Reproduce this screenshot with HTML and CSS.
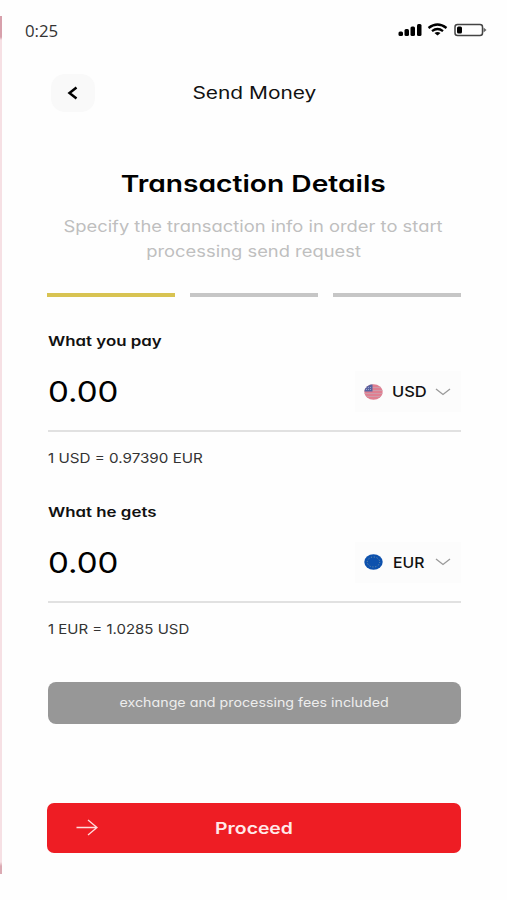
FILE: index.html
```html
<!DOCTYPE html>
<html lang="en">
  <head>
    <meta charset="UTF-8" />
    <meta name="viewport" content="width=device-width, initial-scale=1.0" />
    <title>Send Money</title>
    <link rel="stylesheet" href="styles.css">
  </head>

  <body>
    <div class="edge"></div>
    <div class="screen">
      <div class="status">
        <span class="time">0:25</span>
        <svg class="status-icons" width="90" height="16" viewBox="0 0 90 16">
          <rect x="0.5" y="9.5" width="4.5" height="4.5" rx="1.5" />
          <rect x="6.5" y="7" width="4.5" height="7" rx="1.5" />
          <rect x="12.5" y="4.5" width="4.5" height="9.5" rx="1.5" />
          <rect x="19" y="2" width="4.5" height="12" rx="1.5" />
          <path d="M30.5 6Q39.500 -1 48.500 6M34 9.200Q39.500 4.800 45 9.200" fill="none" stroke="#000" stroke-width="2.300" />
          <path d="M36.500 11Q39.500 9 42.500 11L39.500 13.500Z" />
          <rect x="57" y="2.500" width="27.500" height="11" rx="2.500" fill="none" stroke="#444" stroke-width="1.500" />
          <rect x="59" y="4.500" width="5" height="7" rx="1.500" />
          <path d="M85.500 5.500L88.500 8L85.500 10.500Z" fill="#666" />
        </svg>
      </div>

      <div class="topbar">
        <button class="back">
          <svg width="12" height="14" viewBox="0 0 12 14"><path d="M9.500 1.500L2.500 7L9.500 12.500" fill="none" stroke="#000" stroke-width="2.500" /></svg>
        </button>
        <div class="page-name"><span>Send Money</span></div>
      </div>

      <h1><span>Transaction Details</span></h1>
      <p class="intro"><span>Specify the transaction info in order to start</span><br><span class="intro-end">processing send request</span></p>

      <div class="steps">
        <div class="step active"></div>
        <div class="step"></div>
        <div class="step"></div>
      </div>

      <div class="field">
        <div class="label"><span class="pay">What you pay</span></div>
        <div class="row">
          <div class="amount"><span>0.00</span></div>
          <div class="currency">
            <svg class="flag" width="19" height="16" viewBox="0 0 19 16">
              <defs><clipPath id="round"><ellipse cx="9.500" cy="8" rx="9.200" ry="7.700" /></clipPath></defs>
              <g clip-path="url(#round)">
                <rect width="19" height="16" fill="#df7f91" />
                <path d="M0 3.500H19M0 6.500H19M0 9.500H19M0 12.500H19" stroke="#cf9aa8" stroke-width="1" />
                <rect width="8.500" height="7.500" fill="#5863a0" />
                <path d="M2 3.500H7M2 5.500H7" stroke="#99a0c8" stroke-width="1" stroke-dasharray="1 1" />
              </g>
            </svg>
            <span class="code usd">USD</span>
            <svg class="arrow" width="16" height="8" viewBox="0 0 16 8"><path d="M1 1L8 6.500L15 1" /></svg>
          </div>
        </div>
        <div class="rate"><span class="rate-usd">1 USD = 0.97390 EUR</span></div>
      </div>

      <div class="field">
        <div class="label"><span class="gets">What he gets</span></div>
        <div class="row">
          <div class="amount"><span>0.00</span></div>
          <div class="currency">
            <svg class="flag" width="19" height="16" viewBox="0 0 19 16">
              <ellipse cx="9.500" cy="8" rx="9.200" ry="7.700" fill="#0d51ad" />
              <ellipse cx="9.500" cy="8" rx="6.200" ry="5" fill="none" stroke="#7c9aa6" stroke-width="1" stroke-dasharray="1 1.900" />
            </svg>
            <span class="code eur">EUR</span>
            <svg class="arrow" width="16" height="8" viewBox="0 0 16 8"><path d="M1 1L8 6.500L15 1" /></svg>
          </div>
        </div>
        <div class="rate"><span class="rate-eur">1 EUR = 1.0285 USD</span></div>
      </div>

      <div class="fees"><span>exchange and processing fees included</span></div>

      <button class="proceed">
        <svg width="22" height="18" viewBox="0 0 22 18"><path d="M0.500 8.500H21M12 1L21 8.500L12 16" fill="none" stroke="#ffdcdc" stroke-width="1.300" /></svg>
        <span>Proceed</span>
      </button>
    </div>
  </body>
</html>
```

FILE: styles.css
```css
* {
  box-sizing: border-box;
}

body {
  margin: 0;
  height: 900px;
  display: flex;
  overflow: hidden;
  background-color: #fefefe;
  color: #111;
  font-family: Inter, "Open Sans", sans-serif;
  font-feature-settings: "cv11";
}

button {
  border: 0;
  padding: 0;
  font: inherit;
  font-feature-settings: inherit;
}

svg {
  display: block;
}

.edge {
  width: 2px;
  height: 858px;
  margin-top: 16px;
  background: linear-gradient(#d7a0ab 0 21px, #f6e0e4 24px 846px, #dbaab3 850px);
}

.screen {
  width: 505px;
}

.screen span {
  display: inline-block;
  white-space: nowrap;
}

.status {
  display: flex;
  justify-content: space-between;
  height: 60px;
  padding: 22px 19px 0 23px;
}

.time {
  font-family: "Open Sans", sans-serif;
  font-size: 16px;
  line-height: 18px;
  color: #333;
  transform: scaleX(1.05);
}

/* wide lettering: each line is stretched sideways */
.time,
.pay,
.gets,
.amount span,
.code,
.rate span {
  transform-origin: left;
}

.topbar {
  display: grid;
  grid-template-columns: 44px 1fr 44px;
  align-items: center;
  height: 38px;
  margin: 14px 49px 0 49px;
}

.back {
  display: flex;
  align-items: center;
  justify-content: center;
  height: 38px;
  border-radius: 14px;
  background-color: #f9f9f9;
}

.page-name {
  font-size: 17px;
  line-height: 38px;
  text-align: center;
}

.page-name span {
  transform: scaleX(1.23);
}

h1 {
  margin: 58px 2px 0 0;
  font-size: 23px;
  font-weight: 600;
  line-height: 28px;
  text-align: center;
  color: #000;
}

h1 span {
  transform: scaleX(1.225);
}

.intro {
  margin: 17px 2px 0 0;
  font-size: 15.5px;
  line-height: 24.5px;
  text-align: center;
  color: #bfbfbf;
}

.intro span {
  transform: scaleX(1.185);
}

.steps {
  display: grid;
  grid-template-columns: repeat(3, 128px);
  justify-content: space-between;
  margin: 29px 46px 0 45px;
}

.step {
  height: 4px;
  background-color: #c6c6c6;
}

.active {
  background-color: #d8c352;
}

.field {
  height: 170.5px;
  margin: 0 46px;
}

.steps + .field {
  margin-top: 34px;
}

.label {
  font-size: 13.5px;
  font-weight: 600;
  line-height: 20px;
}

.pay,
.gets {
  transform: scaleX(1.25);
}

.row {
  display: flex;
  justify-content: space-between;
  height: 81px;
  padding-top: 20px;
  border-bottom: 2px solid #e1e1e1;
}

.amount {
  font-size: 29px;
  line-height: 41px;
  color: #000;
}

.amount span {
  transform: scaleX(1.14);
}

.currency {
  display: grid;
  grid-template-columns: 19px 34px 16px;
  column-gap: 9px;
  align-items: center;
  width: 106px;
  height: 41px;
  padding-left: 9px;
  background-color: #fcfcfc;
}

.code {
  font-size: 15px;
  font-weight: 500;
}

.usd {
  transform: scaleX(1.1);
}

.eur {
  transform: translateX(1px) scaleX(1.05);
}

.arrow path {
  fill: none;
  stroke: #999;
  stroke-width: 1.3px;
}

.rate {
  margin-top: 16px;
  font-size: 13.5px;
  line-height: 20px;
  color: #333;
}

.rate-usd {
  transform: scaleX(1.125);
}

.rate-eur {
  transform: scaleX(1.11);
}

.fees {
  height: 42px;
  margin: 10px 46px 0 46px;
  border-radius: 8px;
  background-color: #979797;
  color: #ededed;
  font-size: 12.5px;
  line-height: 41px;
  text-align: center;
}

.fees span {
  transform: scaleX(1.14);
}

.proceed {
  display: grid;
  grid-template-columns: 22px 1fr 22px;
  align-items: center;
  width: 414px;
  height: 50px;
  margin: 79px 0 0 45px;
  padding: 0 29px;
  border-radius: 7px;
  background-color: #ee1d24;
  color: #ffe9e9;
  font-size: 16px;
  font-weight: 600;
}

.proceed span {
  transform: scaleX(1.21);
}
```
